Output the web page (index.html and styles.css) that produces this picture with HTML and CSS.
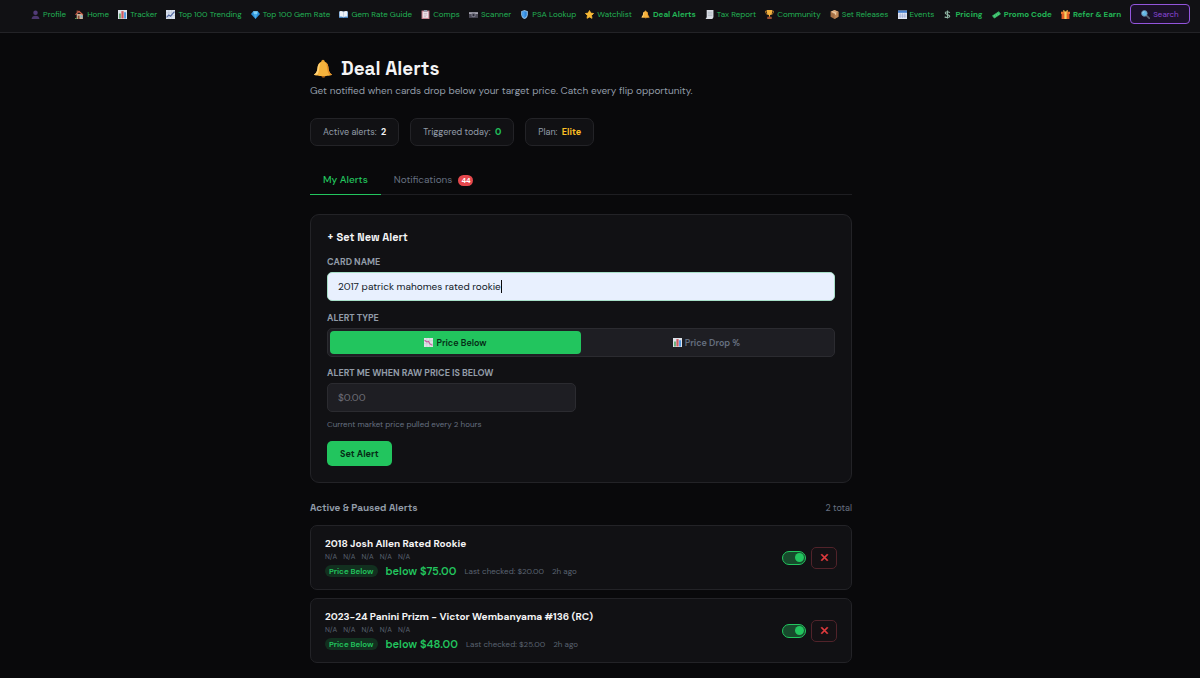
FILE: index.html
```html
<!DOCTYPE html>
<html lang="en">
<head>
<meta charset="utf-8">
<meta name="viewport" content="width=device-width, initial-scale=1">
<title>Deal Alerts</title>
<link rel="stylesheet" href="styles.css">
</head>
<body>
<svg class="sprite" aria-hidden="true">
  <symbol id="i-profile" viewBox="0 0 16 16"><circle cx="8" cy="5" r="4" fill="#523b78"/><path d="M1 16c0-4 3-6 7-6s7 2 7 6z" fill="#4b366d"/></symbol>
  <symbol id="i-home" viewBox="0 0 16 16"><path d="M3 7h11v9H3z" fill="#c9b29a"/><path d="M0 8L7 1l8 7-2 1-6-5-5 5z" fill="#d0604a"/><path d="M3 1h2v4H3z" fill="#b05a44"/><path d="M5 10h3v6H5z" fill="#8a4a34"/><path d="M10 10h3v3h-3z" fill="#6fb3d6"/><path d="M0 14h3v2H0z" fill="#4f9a49"/></symbol>
  <symbol id="i-bars" viewBox="0 0 16 16"><path d="M0 0h16v16H0z" fill="#dde3ea"/><path d="M2 6h3v9H2z" fill="#56a568"/><path d="M6 2h4v13H6z" fill="#cf5a60"/><path d="M11 4h3v11h-3z" fill="#3d8ee0"/></symbol>
  <symbol id="i-trend" viewBox="0 0 16 16"><path d="M0 0h16v16H0z" fill="#dbe2ef"/><path d="M0 5h16M0 10h16M5 0v16M10 0v16" stroke="#aab7cc" stroke-width=".7"/><path d="M1 13l4-4 3 2 7-8" fill="none" stroke="#5368a2" stroke-width="2"/></symbol>
  <symbol id="i-drop" viewBox="0 0 16 16"><path d="M0 0h16v16H0z" fill="#dfe2e6"/><path d="M0 5h16M0 10h16M5 0v16M10 0v16" stroke="#b5bcc6" stroke-width=".7"/><path d="M1 4l4 3 3-1 3 5 4 2" fill="none" stroke="#c65a9b" stroke-width="2"/></symbol>
  <symbol id="i-gem" viewBox="0 0 16 16"><path d="M4 2h8l4 5-8 9-8-9z" fill="#2b90d9"/><path d="M4 2h8l-1 5H5z" fill="#7fd0f7"/><path d="M5 7h6l-3 9z" fill="#49adea"/></symbol>
  <symbol id="i-book" viewBox="0 0 16 16"><path d="M0 3h16v11H0z" fill="#4b8ccc"/><path d="M1 2q4-1 7 1 3-2 7-1v10q-4-1-7 1-3-2-7-1z" fill="#edf2f8"/><path d="M8 3v10" stroke="#a9bdd4"/></symbol>
  <symbol id="i-clip" viewBox="0 0 16 16"><path d="M1 1h14v15H1z" fill="#c88491"/><path d="M3 3h10v11H3z" fill="#efe4ea"/><path d="M5 0h6v3H5z" fill="#8c98a8"/><path d="M5 6h6M5 9h6M5 12h4" stroke="#b69aa8"/></symbol>
  <symbol id="i-camera" viewBox="0 0 16 16"><path d="M0 4h16v10H0z" fill="#4c4b58"/><path d="M0 4h16v3H0z" fill="#aaa9b4"/><circle cx="8" cy="9" r="4" fill="#797887"/><circle cx="8" cy="9" r="2" fill="#272733"/></symbol>
  <symbol id="i-shield" viewBox="0 0 16 16"><path d="M8 0l6 2v6c0 4-3 7-6 8-3-1-6-4-6-8V2z" fill="#8fbce2"/><path d="M8 2l4 1v5c0 3-2 5-4 6-2-1-4-3-4-6V3z" fill="#2c86dc"/><path d="M8 2v12c-2-1-4-3-4-6V3z" fill="#4da2ed"/></symbol>
  <symbol id="i-star" viewBox="0 0 16 16"><path d="M8 1l2.200 4.500 5 .7-3.600 3.600.8 5-4.400-2.300-4.400 2.300.8-5L.8 6.200l5-.7z" fill="#f8b936" stroke="#f8b936" stroke-width="1.500" stroke-linejoin="round"/></symbol>
  <symbol id="i-bell" viewBox="0 0 24 24"><circle cx="12" cy="3" r="2" fill="#e59a2b"/><path d="M10 20a2.500 2.500 0 0 0 5 0z" fill="#a95f14"/><path d="M12 3c-4 0-6 3-6.500 7C5 15 4 17 1 19c2 2 20 2 22 0-3-2-4-4-4.500-9C18 6 16 3 12 3z" fill="#f6b23c"/><path d="M9 5c-2 4-1 10-4 14H1c3-2 4-4 4.500-9C6 7 7 5 9 5z" fill="#ffd277"/><path d="M15 4c3 5 1 11 5 15h3c-3-2-4-4-4.500-9-.3-3-1.500-5-3.500-6z" fill="#e48d27"/></symbol>
  <symbol id="i-receipt" viewBox="0 0 16 16"><path d="M3 0h12v13l-2 3H1l2-3z" fill="#d9dde4"/><path d="M5 4h8M5 7h8M5 10h8" stroke="#9ca5b1"/></symbol>
  <symbol id="i-trophy" viewBox="0 0 16 16"><path d="M3 2H1c0 4 1 5 4 6M13 2h2c0 4-1 5-4 6" stroke="#d58b2c" fill="none" stroke-width="1.500"/><path d="M3 0h10c0 6-1 9-4 9v3H7V9C4 9 3 6 3 0z" fill="#f2b13e"/><path d="M4 12h8v4H4z" fill="#9b4d32"/></symbol>
  <symbol id="i-box" viewBox="0 0 16 16"><path d="M8 0l7 3v9l-7 4-7-4V3z" fill="#a36f46"/><path d="M8 0l7 3-7 4-7-4z" fill="#d7a77b"/><path d="M8 7l7-4v9l-7 4z" fill="#bd8657"/><path d="M4 2l7 3v3l-2 1V6L3 3z" fill="#efd1a9"/></symbol>
  <symbol id="i-cal" viewBox="0 0 16 16"><path d="M0 1h16v15H0z" fill="#e2e7f4"/><path d="M0 1h16v4H0z" fill="#4780d0"/><path d="M4 6v8M8 6v8M12 6v8M1 9h14M1 12h14" stroke="#98a6d2"/></symbol>
  <symbol id="i-dollar" viewBox="0 0 16 16"><path d="M12 5c-1-2-7-3-8 0s8 3 8 6-7 3-9 1M8 1v14" fill="none" stroke="#8fb5a4" stroke-width="2"/></symbol>
  <symbol id="i-ticket" viewBox="0 0 16 16"><path d="M0 10L12 2l4 5L4 15z" fill="#35b966"/><path d="M4 9l2 4M7 7l2 4M10 5l2 4" stroke="#71db93"/></symbol>
  <symbol id="i-gift" viewBox="0 0 16 16"><path d="M1 6h14v10H1z" fill="#e35f27"/><path d="M0 3h16v4H0z" fill="#ef7830"/><path d="M6 3h4v13H6z" fill="#f8d263"/><path d="M8 3C5-1 2 0 4 3zM8 3c3-4 6-3 4 0z" fill="#f4bd4d"/></symbol>
  <symbol id="i-search" viewBox="0 0 16 16"><path d="M9 9l6 6" stroke="#58606e" stroke-width="3" stroke-linecap="round"/><circle cx="6" cy="6" r="5" fill="#65b8e8" stroke="#6687a2" stroke-width="1.500"/><path d="M3 6a3 3 0 0 1 3-3" stroke="#c7ecff" fill="none"/></symbol>
  <symbol id="i-cross" viewBox="0 0 10 10"><path d="M2 1l3 3 3-3 1 1-3 3 3 3-1 1-3-3-3 3-1-1 3-3-3-3z" fill="#e23d3f" stroke="#e23d3f" stroke-width=".5"/></symbol>
</svg>

<header class="topbar">
  <nav class="nav" aria-label="Main">
    <a href="#"><svg class="icon"><use href="#i-profile"/></svg>Profile</a>
    <a href="#"><svg class="icon"><use href="#i-home"/></svg>Home</a>
    <a href="#"><svg class="icon"><use href="#i-bars"/></svg>Tracker</a>
    <a href="#"><svg class="icon"><use href="#i-trend"/></svg>Top 100 Trending</a>
    <a href="#"><svg class="icon"><use href="#i-gem"/></svg>Top 100 Gem Rate</a>
    <a href="#"><svg class="icon"><use href="#i-book"/></svg>Gem Rate Guide</a>
    <a href="#"><svg class="icon"><use href="#i-clip"/></svg>Comps</a>
    <a href="#"><svg class="icon"><use href="#i-camera"/></svg>Scanner</a>
    <a href="#"><svg class="icon"><use href="#i-shield"/></svg>PSA Lookup</a>
    <a href="#"><svg class="icon"><use href="#i-star"/></svg>Watchlist</a>
    <a href="#" class="strong" aria-current="page"><svg class="icon"><use href="#i-bell"/></svg>Deal Alerts</a>
    <a href="#"><svg class="icon"><use href="#i-receipt"/></svg>Tax Report</a>
    <a href="#"><svg class="icon"><use href="#i-trophy"/></svg>Community</a>
    <a href="#"><svg class="icon"><use href="#i-box"/></svg>Set Releases</a>
    <a href="#"><svg class="icon"><use href="#i-cal"/></svg>Events</a>
    <a href="#" class="strong"><svg class="icon"><use href="#i-dollar"/></svg>Pricing</a>
    <a href="#" class="strong"><svg class="icon"><use href="#i-ticket"/></svg>Promo Code</a>
    <a href="#" class="strong"><svg class="icon"><use href="#i-gift"/></svg>Refer &amp; Earn</a>
    <button type="button" class="search"><svg class="icon"><use href="#i-search"/></svg>Search</button>
  </nav>
</header>

<main class="page">
  <h1 class="title"><svg class="title-icon" aria-hidden="true"><use href="#i-bell"/></svg>Deal Alerts</h1>
  <p class="subtitle">Get notified when cards drop below your target price. Catch every flip opportunity.</p>

  <div class="stats">
    <div class="stat">Active alerts: <strong>2</strong></div>
    <div class="stat">Triggered today: <strong class="green">0</strong></div>
    <div class="stat">Plan: <strong class="gold">Elite</strong></div>
  </div>

  <div class="tabs" role="tablist">
    <button type="button" class="tab active" role="tab" aria-selected="true">My Alerts</button>
    <button type="button" class="tab" role="tab" aria-selected="false">Notifications <span class="count">44</span></button>
  </div>

  <form class="panel">
    <h2 class="panel-title">+ Set New Alert</h2>
    <label class="label" for="card">Card name</label>
    <div class="field filled">
      <input id="card" class="input" type="text" value="2017 patrick mahomes rated rookie">
      <span class="caret"></span>
    </div>
    <span class="label" id="type-label">Alert type</span>
    <div class="segments" role="group" aria-labelledby="type-label">
      <button type="button" class="segment on" aria-pressed="true"><svg class="icon"><use href="#i-drop"/></svg>Price Below</button>
      <button type="button" class="segment" aria-pressed="false"><svg class="icon"><use href="#i-bars"/></svg>Price Drop %</button>
    </div>
    <label class="label" for="price">Alert me when raw price is below</label>
    <div class="field half">
      <input id="price" class="input" type="text" placeholder="$0.00">
    </div>
    <p class="hint">Current market price pulled every 2 hours</p>
    <button type="button" class="submit">Set Alert</button>
  </form>

  <div class="list-head">
    <h2 class="list-title">Active &amp; Paused Alerts</h2>
    <span class="total">2 total</span>
  </div>

  <article class="alert">
    <div class="info">
      <h3 class="name">2018 Josh Allen Rated Rookie</h3>
      <div class="grades"><span>N/A</span><span>N/A</span><span>N/A</span><span>N/A</span><span>N/A</span></div>
      <div class="meta"><span class="tag">Price Below</span><strong class="target">below $75.00</strong><span>Last checked: $20.00</span><span>2h ago</span></div>
    </div>
    <input type="checkbox" class="toggle" checked aria-label="2018 Josh Allen Rated Rookie active">
    <button type="button" class="delete" aria-label="Delete alert"><svg class="cross"><use href="#i-cross"/></svg></button>
  </article>

  <article class="alert">
    <div class="info">
      <h3 class="name">2023-24 Panini Prizm - Victor Wembanyama #136 (RC)</h3>
      <div class="grades"><span>N/A</span><span>N/A</span><span>N/A</span><span>N/A</span><span>N/A</span></div>
      <div class="meta"><span class="tag">Price Below</span><strong class="target">below $48.00</strong><span>Last checked: $25.00</span><span>2h ago</span></div>
    </div>
    <input type="checkbox" class="toggle" checked aria-label="Victor Wembanyama #136 active">
    <button type="button" class="delete" aria-label="Delete alert"><svg class="cross"><use href="#i-cross"/></svg></button>
  </article>
</main>
</body>
</html>
```

FILE: styles.css
```css
* {
  box-sizing: border-box;
}

body {
  margin: 0;
  background: #09090b;
  color: #929ca8;
  font-family: "DM Sans", Lato, "Open Sans", sans-serif;
  font-size: 10px;
  line-height: 14px;
}

button,
input {
  font: inherit;
}

button {
  cursor: pointer;
}

h1,
h2,
h3,
p {
  margin: 0;
}

.sprite {
  display: none;
}

.icon {
  width: 9px;
  height: 9px;
  flex: none;
}

/* Top navigation */
.topbar {
  padding: 4px 10px 8px 31px;
  background: #111114;
  border-bottom: 1px solid #232327;
}

.nav {
  display: flex;
  align-items: center;
  justify-content: space-between;
  font-size: 8px;
  line-height: 12px;
  white-space: nowrap;
}

.nav a {
  display: flex;
  align-items: center;
  gap: 3px;
  color: #22b455;
  text-decoration: none;
}

.nav .strong {
  font-weight: 700;
}

.search {
  display: flex;
  align-items: center;
  gap: 3px;
  height: 20px;
  padding: 0 10px;
  border: 1px solid #9355dc;
  border-radius: 4px;
  background: #1b1128;
  color: #8a48d8;
}

/* Page column */
.page {
  max-width: 580px;
  margin: 0 auto;
  padding: 24px 38px 16px 0;
}

.title {
  display: flex;
  align-items: center;
  gap: 8px;
  padding-left: 3px;
  color: #f4f4f5;
  font-family: "Space Grotesk", Inter, sans-serif;
  font-size: 19px;
  line-height: 24px;
  font-weight: 700;
}

.title-icon {
  width: 20px;
  height: 20px;
}

.subtitle {
  margin-top: 2px;
  line-height: 16px;
}

.stats {
  display: flex;
  gap: 11px;
  margin-top: 19px;
  font-size: 9px;
}

.stat {
  padding: 6px 12px;
  border: 1px solid #232327;
  border-radius: 7px;
  background: #111114;
}

.stat strong {
  margin-left: 2px;
  color: #f4f4f5;
}

.stat .green {
  color: #22c55e;
}

.stat .gold {
  color: #fbbf24;
}

.tabs {
  display: flex;
  margin-top: 20px;
  border-bottom: 1px solid #1e1e22;
}

.tab {
  display: flex;
  align-items: center;
  gap: 6px;
  height: 29px;
  margin-bottom: -1px;
  padding: 0 13px;
  border: 0;
  border-bottom: 1px solid transparent;
  background: none;
  color: #667080;
}

.tab.active {
  border-color: #22c55e;
  color: #22c55e;
  font-weight: 500;
}

.count {
  padding: 0 3px;
  border-radius: 6px;
  background: #e5484d;
  color: #fff;
  font-size: 7px;
  line-height: 11px;
  font-weight: 700;
}

/* New alert form */
.panel {
  margin-top: 19px;
  padding: 14px 16px 16px;
  border: 1px solid #232327;
  border-radius: 9px;
  background: #111114;
}

.panel-title {
  margin-bottom: 11px;
  color: #f4f4f5;
  font-family: "Space Grotesk", Inter, sans-serif;
  font-size: 11px;
  line-height: 16px;
}

.label {
  display: block;
  margin-bottom: 4px;
  font-size: 9px;
  line-height: 12px;
  font-weight: 700;
  text-transform: uppercase;
}

.field {
  position: relative;
  margin-bottom: 11px;
}

.input {
  display: block;
  width: 100%;
  height: 29px;
  padding: 0 10px;
  border: 1px solid #2b2b30;
  border-radius: 5px;
  outline: 0;
  background: #1e1e23;
  color: #111827;
}

.input::placeholder {
  color: #71717a;
}

.filled .input {
  border-color: #a7dfc8;
  background: #e8f0fe;
}

.caret {
  position: absolute;
  top: 8px;
  left: 174px;
  width: 1px;
  height: 13px;
  background: #09090b;
}

.segments {
  display: flex;
  height: 29px;
  margin-bottom: 10px;
  padding: 2px;
  border: 1px solid #2b2b30;
  border-radius: 5px;
  background: #1e1e23;
}

.segment {
  display: flex;
  flex: 1;
  align-items: center;
  justify-content: center;
  gap: 3px;
  padding: 0;
  border: 0;
  border-radius: 4px;
  background: none;
  color: #667080;
  font-size: 9px;
  font-weight: 600;
}

.segment.on {
  background: #22c55e;
  color: #052e16;
}

.half {
  width: 49%;
  margin-bottom: 6px;
}

.hint {
  color: #667080;
  font-size: 8px;
  line-height: 12px;
}

.submit {
  height: 25px;
  margin-top: 11px;
  padding: 0 13px;
  border: 0;
  border-radius: 5px;
  background: #22c55e;
  color: #052e16;
  font-size: 9px;
  font-weight: 700;
}

/* Alert list */
.list-head {
  display: flex;
  align-items: center;
  justify-content: space-between;
  margin: 18px 0 10px;
}

.list-title {
  font-family: "Space Grotesk", Inter, sans-serif;
  font-size: 10px;
  line-height: 14px;
  font-weight: 700;
}

.total {
  color: #667080;
  font-size: 9px;
}

.alert {
  display: flex;
  align-items: center;
  gap: 5px;
  margin-bottom: 8px;
  padding: 10px 14px;
  border: 1px solid #232327;
  border-radius: 7px;
  background: #111114;
}

.info {
  flex: 1;
}

.name {
  color: #f4f4f5;
  font-size: 10px;
  line-height: 15px;
}

.grades {
  display: flex;
  gap: 6px;
  color: #5b6472;
  font-size: 7px;
  line-height: 12px;
}

.meta {
  display: flex;
  align-items: center;
  gap: 8px;
  color: #5b6472;
  font-size: 8px;
  line-height: 16px;
}

.tag {
  padding: 0 4px;
  border-radius: 6px;
  background: #12301f;
  color: #22c55e;
  font-size: 8px;
  line-height: 12px;
  font-weight: 600;
}

.target {
  color: #22c55e;
  font-size: 11px;
  font-weight: 600;
}

.toggle {
  display: flex;
  align-items: center;
  justify-content: flex-end;
  width: 24px;
  height: 14px;
  margin: 0;
  padding: 1px;
  appearance: none;
  border: 1px solid #22c55e;
  border-radius: 7px;
  background: #174a2c;
}

.toggle::before {
  content: "";
  width: 9px;
  height: 9px;
  border-radius: 50%;
  background: #22c55e;
}

.toggle:not(:checked) {
  justify-content: flex-start;
}

.delete {
  display: grid;
  place-items: center;
  width: 26px;
  height: 22px;
  padding: 0;
  border: 1px solid #51232a;
  border-radius: 5px;
  background: #141114;
}

.cross {
  width: 9px;
  height: 9px;
}
```
